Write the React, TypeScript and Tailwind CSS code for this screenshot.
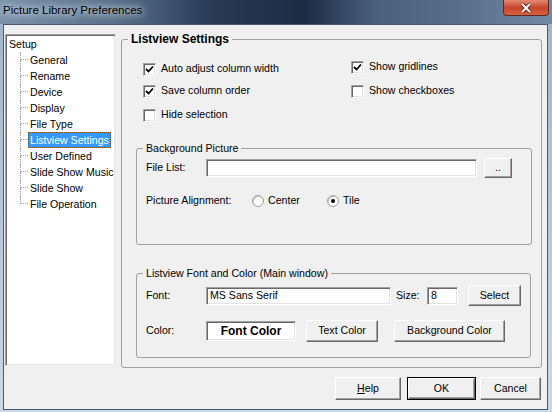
import React from 'react';

const TREE = ['General', 'Rename', 'Device', 'Display', 'File Type', 'Listview Settings', 'User Defined', 'Slide Show Music', 'Slide Show', 'File Operation'];

const Check = ({ checked }: { checked?: boolean }) => (
  <div className="w-[13px] h-[13px] shrink-0 bg-white border border-[#a0a0a0] border-b-white border-r-white shadow-[inset_1px_1px_0_#696969,inset_-1px_-1px_0_#e3e3e3] flex items-center justify-center">
    {checked && (
      <svg width="9" height="9" viewBox="0 0 9 9">
        <path d="M1 4 L3.5 6.5 L8 1.5" stroke="#000" strokeWidth="1.8" fill="none" />
      </svg>
    )}
  </div>
);

const CheckRow = ({ checked, label, className = '' }: { checked?: boolean; label: string; className?: string }) => (
  <div className={`flex items-center h-[16px] gap-[5px] ${className}`}>
    <Check checked={checked} />
    <span>{label}</span>
  </div>
);

const Radio = ({ on }: { on?: boolean }) => (
  <div className="w-[12px] h-[12px] shrink-0 rounded-full bg-white border border-[#a0a0a0] shadow-[inset_1px_1px_0_#c4c4c4] flex items-center justify-center">
    {on && <div className="w-[4px] h-[4px] rounded-full bg-black" />}
  </div>
);

const Btn = ({ children, className = '' }: { children: React.ReactNode; className?: string }) => (
  <div className={`shrink-0 flex items-center justify-center bg-[#f0f0f0] border border-white border-b-[#696969] border-r-[#696969] shadow-[inset_-1px_-1px_0_#a0a0a0] ${className}`}>
    {children}
  </div>
);

const Field = ({ children, className = '' }: { children?: React.ReactNode; className?: string }) => (
  <div className={`shrink-0 flex items-center bg-white border border-[#a0a0a0] border-b-white border-r-white shadow-[inset_1px_1px_0_#696969,inset_-1px_-1px_0_#e3e3e3] ${className}`}>
    {children}
  </div>
);

export default function App() {
  return (
    <div className="w-[552px] h-[412px] overflow-hidden flex flex-col bg-gradient-to-b from-[#9fb4cb] to-[#c9d9e8] font-['Liberation_Sans',Arial,sans-serif] text-[10.6px] text-black">
      {/* title bar */}
      <div className="h-[24px] shrink-0 flex items-start bg-[linear-gradient(90deg,#7d93ab_0%,#566e8a_22%,#2a3b56_38%,#1d2a42_55%,#4a607d_68%,#566d8a_82%,#7189a4_100%)]">
        <div className="pl-[3px] pt-[3px] text-[11.5px] leading-[15px] text-black [text-shadow:0_0_6px_#dfe8f0,0_0_10px_#dfe8f0]">
          Picture Library Preferences
        </div>
        <div className="ml-auto mr-[3px] w-[46px] h-[16px] rounded-b-[4px] border border-t-0 border-[#5a2a24] bg-gradient-to-b from-[#e28a72] via-[#c8452a] to-[#d6603f] flex items-center justify-center">
          <svg width="12" height="10" viewBox="0 0 12 10">
            <path d="M2 1 L10 9 M10 1 L2 9" stroke="#3a1a14" strokeWidth="3.4" />
            <path d="M2 1 L10 9 M10 1 L2 9" stroke="#fff" strokeWidth="2" />
          </svg>
        </div>
      </div>

      {/* client area */}
      <div className="flex-1 ml-[3px] mr-[4px] mb-[2px] bg-[#f0f0f0] border border-[#4a5a6e] flex flex-col">
        <div className="flex items-start pt-[8px] pl-[1px]">
          {/* tree */}
          <div className="mt-[1px] w-[111px] h-[332px] shrink-0 bg-white border border-[#a0a0a0] border-b-[#f0f0f0] border-r-[#f0f0f0] shadow-[inset_1px_1px_0_#696969,inset_-1px_-1px_0_#e3e3e3] pt-[1px] pl-[2px] pr-[2px]">
            <div className="h-[16px] leading-[16px] pl-[1px]">Setup</div>
            {TREE.map((t, i) => {
              const last = i === TREE.length - 1;
              const sel = t === 'Listview Settings';
              return (
                <div key={t} className="flex h-[16px]">
                  <div className="ml-[12px] w-[8px] flex flex-col shrink-0">
                    <div className="h-[8px] border-l border-b border-dotted border-[#a0a0a0]" />
                    <div className={`h-[8px] ${last ? '' : 'border-l border-dotted border-[#a0a0a0]'}`} />
                  </div>
                  <div className={`leading-[14px] px-[1px] border border-dotted whitespace-nowrap ${sel ? 'bg-[#3399ff] text-white border-[#7a4a10]' : 'border-transparent'}`}>
                    {t}
                  </div>
                </div>
              );
            })}
          </div>

          {/* Listview Settings group */}
          <fieldset className="ml-[5px] w-[421px] h-[335px] shrink-0 border border-[#a0a0a0] rounded-[3px]">
            <legend className="ml-[6px] px-[3px] font-bold text-[12px] leading-[13px]">Listview Settings</legend>
            <div className="h-[96px] flex pl-[21px]">
              <div className="w-[208px] flex flex-col pt-[15px]">
                <CheckRow checked label="Auto adjust column width" />
                <CheckRow checked label="Save column order" className="mt-[6px]" />
                <CheckRow label="Hide selection" className="mt-[8px]" />
              </div>
              <div className="flex flex-col pt-[13px]">
                <CheckRow checked label="Show gridlines" />
                <CheckRow label="Show checkboxes" className="mt-[8px]" />
              </div>
            </div>

            <fieldset className="ml-[14px] w-[396px] h-[103px] border border-[#a0a0a0] rounded-[3px]">
              <legend className="ml-[6px] px-[3px] leading-[12px]">Background Picture</legend>
              <div className="flex items-center mt-[4px] pl-[9px] h-[20px]">
                <span className="w-[60px] shrink-0">File List:</span>
                <Field className="w-[271px] h-[18px]" />
                <Btn className="ml-[7px] w-[28px] h-[20px]">..</Btn>
              </div>
              <div className="flex items-center mt-[15px] pl-[9px] h-[16px]">
                <span className="w-[106px] shrink-0">Picture Alignment:</span>
                <div className="w-[75px] flex items-center gap-[4px]">
                  <Radio />
                  <span>Center</span>
                </div>
                <div className="flex items-center gap-[4px]">
                  <Radio on />
                  <span>Tile</span>
                </div>
              </div>
            </fieldset>

            <fieldset className="ml-[14px] mt-[22px] w-[395px] h-[91px] border border-[#a0a0a0] rounded-[3px]">
              <legend className="ml-[6px] px-[3px] leading-[12px]">Listview Font and Color (Main window)</legend>
              <div className="flex items-center mt-[6px] pl-[9px] h-[21px]">
                <span className="w-[60px] shrink-0">Font:</span>
                <Field className="w-[185px] h-[18px] pl-[3px]">MS Sans Serif</Field>
                <span className="ml-[5px] w-[31px] shrink-0">Size:</span>
                <Field className="w-[31px] h-[18px] pl-[3px]">8</Field>
                <Btn className="ml-[10px] w-[53px] h-[21px]">Select</Btn>
              </div>
              <div className="flex items-center mt-[14px] pl-[9px] h-[22px]">
                <span className="w-[60px] shrink-0">Color:</span>
                <Field className="w-[90px] h-[20px] justify-center font-bold text-[12px]">Font Color</Field>
                <Btn className="ml-[10px] w-[72px] h-[22px]">Text Color</Btn>
                <Btn className="ml-[16px] w-[111px] h-[22px]">Background Color</Btn>
              </div>
            </fieldset>
          </fieldset>
        </div>

        {/* dialog buttons */}
        <div className="flex justify-end items-center mt-[9px] pr-[6px]">
          <Btn className="w-[66px] h-[23px]">
            <span><span className="underline">H</span>elp</span>
          </Btn>
          <div className="ml-[6px] w-[69px] h-[23px] border border-black flex">
            <Btn className="flex-1">OK</Btn>
          </div>
          <Btn className="ml-[4px] w-[61px] h-[23px]">Cancel</Btn>
        </div>
      </div>
    </div>
  );
}
